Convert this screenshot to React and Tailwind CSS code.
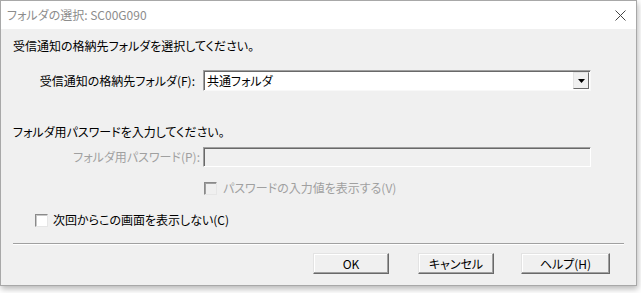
const FONT = "font-['Noto_Sans_CJK_JP',sans-serif] [font-feature-settings:'palt']";

const CloseIcon = () => (
    <svg width="11" height="11" viewBox="0 0 11 11" className="block">
        <path d="M0.5 0.5 L10.5 10.5 M10.5 0.5 L0.5 10.5" stroke="#444" strokeWidth="1" fill="none" />
    </svg>
);

const CheckBox = ({ disabled }) => (
    <span
        className={`inline-block w-[13px] h-[13px] shrink-0 border border-t-[#8a8a8a] border-l-[#8a8a8a] border-r-[#e6e6e6] border-b-[#e6e6e6] ${
            disabled ? 'bg-[#f0f0f0] shadow-[inset_1px_1px_0_#a0a0a0]' : 'bg-white shadow-[inset_1px_1px_0_#c8c8c8]'
        }`}
    />
);

const Button = ({ children, className = '' }) => (
    <button
        type="button"
        className={`h-[21px] text-[12px] leading-none text-black bg-[#f0f0f0] border border-t-[#e3e3e3] border-l-[#e3e3e3] border-r-[#696969] border-b-[#696969] shadow-[inset_-1px_-1px_0_#a0a0a0,inset_1px_1px_0_#ffffff] ${className}`}
    >
        {children}
    </button>
);

export default function App() {
    return (
        <div className={`w-[641px] h-[293px] bg-white ${FONT}`}>
            <div className="w-[637px] h-[286px] flex flex-col border border-[#a8a8a8] shadow-[1px_3px_6px_rgba(0,0,0,0.28)]">
                {/* Title bar */}
                <div className="h-[28px] bg-white flex items-center justify-between pl-[6px] pr-[10px]">
                    <span className="text-[12px] text-[#8c8c8c]">フォルダの選択: SC00G090</span>
                    <CloseIcon />
                </div>

                {/* Body */}
                <div className="flex-1 bg-[#f0f0f0] flex flex-col px-[12px] pt-[9px] text-[12px] leading-[16px] text-black">
                    <div>受信通知の格納先フォルダを選択してください。</div>

                    <div className="flex items-center mt-[16px]">
                        <label className="w-[190px] text-right pr-[8px]">受信通知の格納先フォルダ(F):</label>
                        <div className="w-[388px] h-[21px] flex items-center bg-white border border-t-[#a0a0a0] border-l-[#a0a0a0] border-r-[#f8f8f8] border-b-[#f8f8f8] shadow-[inset_1px_1px_0_#696969]">
                            <span className="flex-1 pl-[3px]">共通フォルダ</span>
                            <span className="w-[16px] h-[17px] mr-[1px] flex items-center justify-center bg-[#f0f0f0] border border-t-[#e3e3e3] border-l-[#e3e3e3] border-r-[#696969] border-b-[#696969]">
                                <svg width="7" height="4" viewBox="0 0 7 4">
                                    <path d="M0 0 H7 L3.5 4 Z" fill="#000" />
                                </svg>
                            </span>
                        </div>
                    </div>

                    <div className="mt-[33px]">フォルダ用パスワードを入力してください。</div>

                    <div className="flex items-center mt-[7px]">
                        <label className="w-[190px] text-right pr-[3px] text-[#a0a0a0]">フォルダ用パスワード(P):</label>
                        <div className="w-[388px] h-[20px] bg-[#f0f0f0] border border-t-[#a0a0a0] border-l-[#a0a0a0] border-r-white border-b-white shadow-[inset_1px_1px_0_#696969]" />
                    </div>

                    <div className="flex items-center gap-[6px] mt-[12px] ml-[191px] h-[18px] text-[#a0a0a0]">
                        <CheckBox disabled />
                        <span>パスワードの入力値を表示する(V)</span>
                    </div>

                    <div className="flex items-center gap-[5px] mt-[14px] ml-[22px] h-[18px]">
                        <CheckBox />
                        <span>次回からこの画面を表示しない(C)</span>
                    </div>

                    <div className="mt-[14px] h-[2px] border-t border-t-[#a0a0a0] border-b border-b-white" />

                    <div className="flex mt-[8px] pl-[300px]">
                        <Button className="w-[76px]">OK</Button>
                        <Button className="w-[76px] ml-[29px]">キャンセル</Button>
                        <Button className="w-[89px] ml-[27px]">ヘルプ(H)</Button>
                    </div>
                </div>
            </div>
        </div>
    );
}
